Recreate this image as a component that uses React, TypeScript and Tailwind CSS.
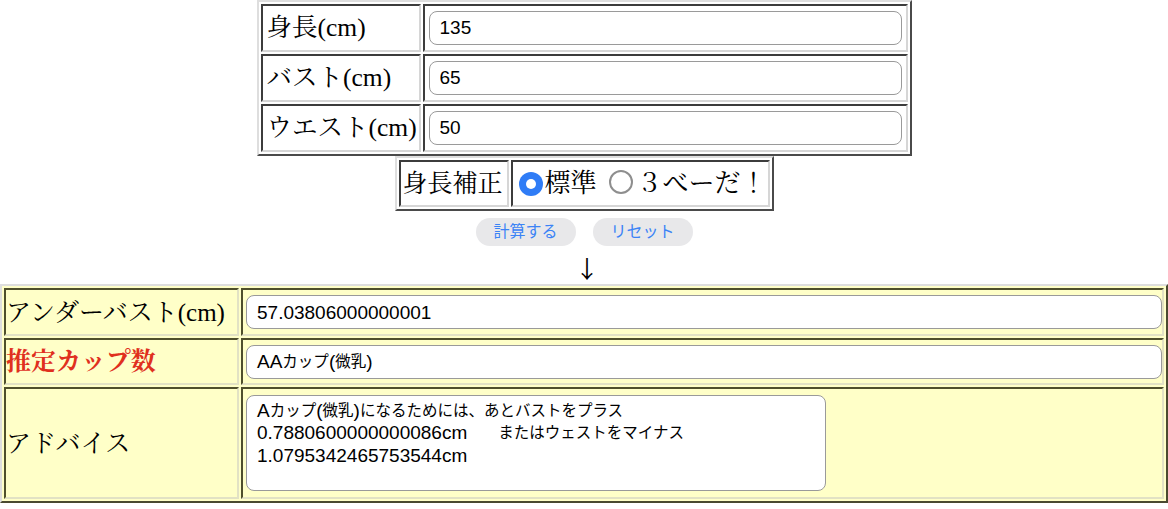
import React from "react";

const serif = "font-['Liberation_Serif','Noto_Serif_CJK_JP','Noto_Sans_CJK_JP',serif]";
const sans = "font-['Liberation_Sans','Noto_Sans_CJK_JP',sans-serif]";

const cellTop =
  "border-2 border-solid border-t-[#3c3c3c] border-l-[#3c3c3c] border-b-[#d6d6d6] border-r-[#d6d6d6] bg-white";
const cellBottom =
  "border-2 border-solid border-t-[#4f4f2c] border-l-[#4f4f2c] border-b-[#e2e2c4] border-r-[#e2e2c4] bg-[#ffffc8]";

const inputCls = `${sans} block w-full h-[34px] rounded-[8px] border border-solid border-[#9a9a9a] bg-white px-[10px] text-[19px] text-black outline-none`;

function Mixed({ text }: { text: string }) {
  const parts = text.match(/[\x00-\x7f]+|[^\x00-\x7f]+/g) || [];
  return (
    <>
      {parts.map((p, i) =>
        /^[\x00-\x7f]+$/.test(p) ? (
          <span key={i} className="text-[19px]">{p}</span>
        ) : (
          <span key={i} className="text-[15.5px]">{p}</span>
        )
      )}
    </>
  );
}

function FakeInput({ text }: { text: string }) {
  return (
    <div className={`${sans} flex items-center w-full h-[34px] rounded-[8px] border border-solid border-[#9a9a9a] bg-white px-[10px] text-black whitespace-nowrap leading-none`}>
      <Mixed text={text} />
    </div>
  );
}

function Radio({ checked }: { checked: boolean }) {
  return checked ? (
    <span className="inline-flex w-[24px] h-[24px] rounded-full bg-[#2f7cf6] items-center justify-center shrink-0">
      <span className="w-[10px] h-[10px] rounded-full bg-white" />
    </span>
  ) : (
    <span className="inline-block w-[24px] h-[24px] rounded-full border-2 border-solid border-[#8e8e8e] bg-white shrink-0" />
  );
}

export default function App() {
  const top = [
    ["身長(cm)", "135"],
    ["バスト(cm)", "65"],
    ["ウエスト(cm)", "50"],
  ];
  const advice = [
    "Aカップ(微乳)になるためには、あとバストをプラス",
    "0.7880600000000086cm\u3000\u3000またはウェストをマイナス",
    "1.0795342465753544cm",
  ];
  return (
    <div className={`${serif} bg-white text-black w-[1168px] h-[509px] overflow-hidden`}>
      <table className="mx-auto border-separate border-spacing-[2px] border-2 border-solid border-t-[#dedede] border-l-[#dedede] border-b-[#4a4a4a] border-r-[#4a4a4a]">
        <tbody>
          {top.map(([l, v]) => (
            <tr key={l}>
              <td className={`${cellTop} w-[160px] h-[48px] pl-[4px] pr-0 text-[25.5px] leading-none whitespace-nowrap`}>{l}</td>
              <td className={`${cellTop} w-[485px] h-[48px] px-[4px]`}>
                <input className={inputCls} defaultValue={v} />
              </td>
            </tr>
          ))}
        </tbody>
      </table>

      <table className="mx-auto border-separate border-spacing-[2px] border-2 border-solid border-t-[#dedede] border-l-[#dedede] border-b-[#4a4a4a] border-r-[#4a4a4a]">
        <tbody>
          <tr>
            <td className={`${cellTop} w-[110px] h-[47px] px-[2px] text-[25px] leading-none whitespace-nowrap`}>身長補正</td>
            <td className={`${cellTop} w-[259px] h-[47px] pl-[6px] text-[25px] leading-none whitespace-nowrap`}>
              <div className="flex items-center">
                <Radio checked />
                <span className="ml-[2px] text-[26px]">標準</span>
                <span className="ml-[12px]"><Radio checked={false} /></span>
                <span className="ml-[4px] text-[26px]">３べーだ！</span>
              </div>
            </td>
          </tr>
        </tbody>
      </table>

      <div className={`${sans} flex justify-center gap-[17px] mt-[7px]`}>
        <button className="w-[100px] h-[28px] rounded-full bg-[#e8e8ea] text-[#3b83f6] text-[16px] leading-none">計算する</button>
        <button className="w-[100px] h-[28px] rounded-full bg-[#e8e8ea] text-[#3b83f6] text-[16px] leading-none">リセット</button>
      </div>

      <div className="h-[38px] flex items-end justify-center pl-[6px] pb-[1px] font-['Noto_Sans_CJK_JP',sans-serif] text-[24px] leading-[30px]">↓</div>

      <table className="w-full border-separate border-spacing-[2px] border-2 border-solid border-t-[#dedede] border-l-[#dedede] border-b-[#4a4a30] border-r-[#4a4a30] bg-[#ffffc8]">
        <tbody>
          <tr>
            <td className={`${cellBottom} w-[235px] h-[48px] pl-0 text-[25px] leading-none whitespace-nowrap`}>アンダーバスト(cm)</td>
            <td className={`${cellBottom} h-[48px] pl-[3px] pr-0`}>
              <FakeInput text="57.03806000000001" />
            </td>
          </tr>
          <tr>
            <td className={`${cellBottom} w-[235px] h-[47px] pl-0 text-[25px] leading-none whitespace-nowrap font-bold text-[#e0301e]`}>推定カップ数</td>
            <td className={`${cellBottom} h-[47px] pl-[3px] pr-0`}>
              <FakeInput text="AAカップ(微乳)" />
            </td>
          </tr>
          <tr>
            <td className={`${cellBottom} w-[235px] h-[112px] pl-0 text-[25px] leading-none whitespace-nowrap`}>アドバイス</td>
            <td className={`${cellBottom} h-[112px] pl-[3px] pr-0`}>
              <div className={`${sans} w-[580px] h-[96px] rounded-[8px] border border-solid border-[#9a9a9a] bg-white px-[10px] pt-[3px] text-black whitespace-pre overflow-hidden`}>
                {advice.map((line, i) => (
                  <div key={i} className="h-[22.5px] flex items-center leading-none">
                    <Mixed text={line} />
                  </div>
                ))}
              </div>
            </td>
          </tr>
        </tbody>
      </table>
    </div>
  );
}
